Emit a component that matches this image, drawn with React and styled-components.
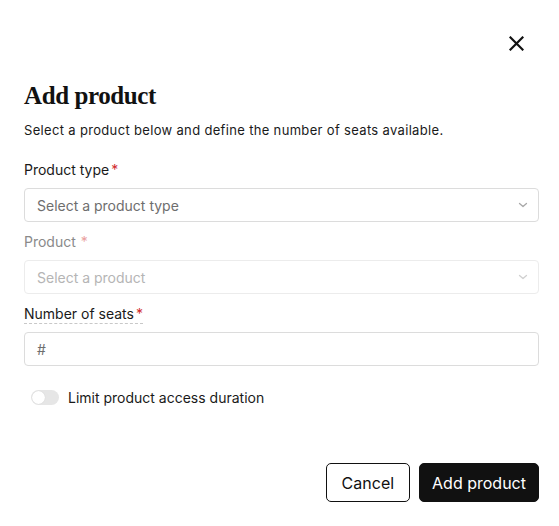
import React from "react";
import styled, { createGlobalStyle } from "styled-components";

const Global = createGlobalStyle`
  html, body { margin: 0; padding: 0; background: #ffffff; }
  body { font-family: "Inter", "Liberation Sans", sans-serif; color: #111; }
  * { box-sizing: border-box; }
`;

const Dialog = styled.div`
  width: 559px;
  height: 526px;
  padding: 33px 20px 24px 24px;
  display: flex;
  flex-direction: column;
`;

const TopBar = styled.div`
  display: flex;
  justify-content: flex-end;
  height: 20px;
`;

const CloseButton = styled.button`
  width: 20px;
  height: 20px;
  margin-right: 13px;
  padding: 0;
  border: none;
  background: none;
  display: flex;
  align-items: center;
  justify-content: center;
  cursor: pointer;
`;

const Title = styled.h2`
  margin: 28px 0 0;
  font-family: "Liberation Serif", "DejaVu Serif", serif;
  font-weight: 700;
  font-size: 25px;
  line-height: 30px;
  letter-spacing: -0.4px;
  color: #111;
`;

const Subtitle = styled.p`
  margin: 9px 0 0;
  font-size: 13px;
  line-height: 20px;
  letter-spacing: 0.33px;
  color: #1a1a1a;
`;

const Fields = styled.div`
  margin-top: 20px;
  display: flex;
  flex-direction: column;
  gap: 10px;
`;

const Field = styled.div`
  display: flex;
  flex-direction: column;
  gap: 8px;
`;

const Label = styled.label`
  align-self: flex-start;
  font-size: 14px;
  color: ${(p) => (p.$disabled ? "#8a8a8a" : "#1a1a1a")};
  border-bottom: ${(p) => (p.$hint ? "1px dashed #c8c8c8" : "none")};
  line-height: ${(p) => (p.$hint ? "19px" : "20px")};
`;

const Star = styled.span`
  color: ${(p) => (p.$disabled ? "#eaa0a0" : "#d12c2c")};
  margin-left: ${(p) => (p.$gap ? "5px" : "2px")};
`;

const Box = styled.div`
  height: 34px;
  border: 1px solid ${(p) => (p.$disabled ? "#ececec" : "#dcdcdc")};
  border-radius: 4px;
  padding: 0 10px 0 12px;
  display: flex;
  align-items: center;
  justify-content: space-between;
  font-size: 14px;
  color: ${(p) => (p.$disabled ? "#b5b5b5" : "#6e6e6e")};
  background: #fff;
`;

const Chevron = ({ light }) => (
  <svg width="10" height="6" viewBox="0 0 10 6" fill="none">
    <path d="M1.5 1.5L5 4.5L8.5 1.5" stroke={light ? "#d0d0d0" : "#a8a8a8"} strokeWidth="1.3" strokeLinecap="round" strokeLinejoin="round" />
  </svg>
);

const ToggleRow = styled.div`
  margin-top: 23px;
  padding-left: 7px;
  display: flex;
  align-items: center;
  gap: 9px;
  font-size: 14px;
  color: #1a1a1a;
`;

const Switch = styled.span`
  width: 28px;
  height: 15px;
  border-radius: 8px;
  background: #e6e6e6;
  padding: 1px;
  display: flex;
  align-items: center;
`;

const Knob = styled.span`
  width: 13px;
  height: 13px;
  border-radius: 50%;
  background: #fff;
  box-shadow: 0 0 1px rgba(0, 0, 0, 0.15);
`;

const Footer = styled.div`
  margin-top: auto;
  display: flex;
  justify-content: flex-end;
  gap: 9px;
`;

const Button = styled.button`
  height: 39px;
  padding: 0 ${(p) => (p.$primary ? "12px" : "15px")};
  border-radius: 5px;
  font-family: "Inter", "Liberation Sans", sans-serif;
  font-size: 16px;
  border: 1px solid #111;
  background: ${(p) => (p.$primary ? "#111" : "#fff")};
  color: ${(p) => (p.$primary ? "#fff" : "#111")};
  cursor: pointer;
`;

export default function App() {
  return (
    <>
      <Global />
      <Dialog>
        <TopBar>
          <CloseButton aria-label="Close">
            <svg width="15" height="15" viewBox="0 0 15 15">
              <path d="M1.5 1.5L13.5 13.5M13.5 1.5L1.5 13.5" stroke="#111" strokeWidth="2.2" strokeLinecap="square" />
            </svg>
          </CloseButton>
        </TopBar>
        <Title>Add product</Title>
        <Subtitle>Select a product below and define the number of seats available.</Subtitle>
        <Fields>
          <Field>
            <Label>Product type<Star>*</Star></Label>
            <Box>
              <span>Select a product type</span>
              <Chevron />
            </Box>
          </Field>
          <Field>
            <Label $disabled>Product<Star $disabled $gap>*</Star></Label>
            <Box $disabled>
              <span>Select a product</span>
              <Chevron light />
            </Box>
          </Field>
          <Field>
            <Label $hint>Number of seats<Star>*</Star></Label>
            <Box>
              <span>#</span>
            </Box>
          </Field>
        </Fields>
        <ToggleRow>
          <Switch><Knob /></Switch>
          <span>Limit product access duration</span>
        </ToggleRow>
        <Footer>
          <Button>Cancel</Button>
          <Button $primary>Add product</Button>
        </Footer>
      </Dialog>
    </>
  );
}
